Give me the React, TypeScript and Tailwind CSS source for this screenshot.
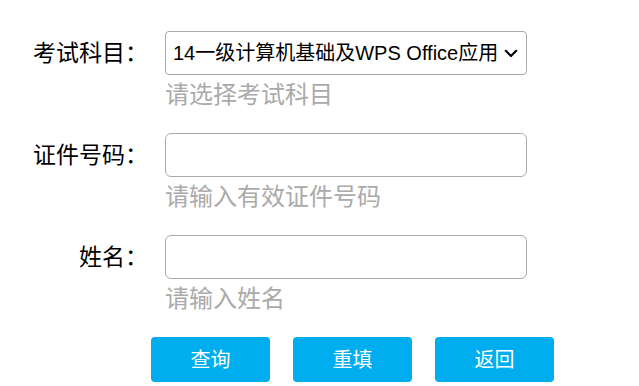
import { useState } from "react";

const FONT = {
  fontFamily: '"Liberation Sans", "Noto Sans CJK SC", sans-serif',
};

function Row({
  label,
  hint,
  children,
}: {
  label: string;
  hint: string;
  children: React.ReactNode;
}) {
  return (
    <div className="mb-[20px] flex items-start">
      <label className="flex h-[44px] w-[148px] shrink-0 items-center justify-end text-[23px] text-black">
        {label}
      </label>
      <div className="ml-[17px] flex flex-col">
        {children}
        <div className="mt-[2px] h-[36px] text-[24px] leading-[36px] text-[#aaaaaa]">
          {hint}
        </div>
      </div>
    </div>
  );
}

export default function App() {
  const [subject, setSubject] = useState("14");
  const [idNo, setIdNo] = useState("");
  const [name, setName] = useState("");

  return (
    <div className="min-h-[386px] bg-white pt-[31px]" style={FONT}>
      <Row label="考试科目：" hint="请选择考试科目">
        <div className="relative h-[44px] w-[362px]">
          <select
            value={subject}
            onChange={(e) => setSubject(e.target.value)}
            className="h-full w-full appearance-none rounded-[4px] border border-[#aaaaaa] bg-white pl-[7px] pr-[28px] text-[20px] text-black outline-none"
          >
            <option value="14">14一级计算机基础及WPS Office应用</option>
            <option value="15">15一级计算机基础及MS Office应用</option>
          </select>
          <svg
            viewBox="0 0 14 9"
            className="pointer-events-none absolute right-[9px] top-[18px] h-[9px] w-[14px]"
            fill="none"
            aria-hidden
          >
            <path
              d="M1.8 1.8 7 7l5.2-5.2"
              stroke="black"
              strokeWidth="2.2"
              strokeLinecap="round"
              strokeLinejoin="round"
            />
          </svg>
        </div>
      </Row>

      <Row label="证件号码：" hint="请输入有效证件号码">
        <input
          value={idNo}
          onChange={(e) => setIdNo(e.target.value)}
          className="h-[44px] w-[362px] rounded-[6px] border border-[#aaaaaa] bg-white px-[8px] text-[20px] outline-none"
        />
      </Row>

      <Row label="姓名：" hint="请输入姓名">
        <input
          value={name}
          onChange={(e) => setName(e.target.value)}
          className="h-[44px] w-[362px] rounded-[6px] border border-[#aaaaaa] bg-white px-[8px] text-[20px] outline-none"
        />
      </Row>

      <div className="ml-[151px] flex gap-[23px]">
        {["查询", "重填", "返回"].map((t) => (
          <button
            key={t}
            type="button"
            className="h-[45px] w-[119px] rounded-[4px] bg-[#00aeef] text-[20px] text-white"
          >
            {t}
          </button>
        ))}
      </div>
    </div>
  );
}
